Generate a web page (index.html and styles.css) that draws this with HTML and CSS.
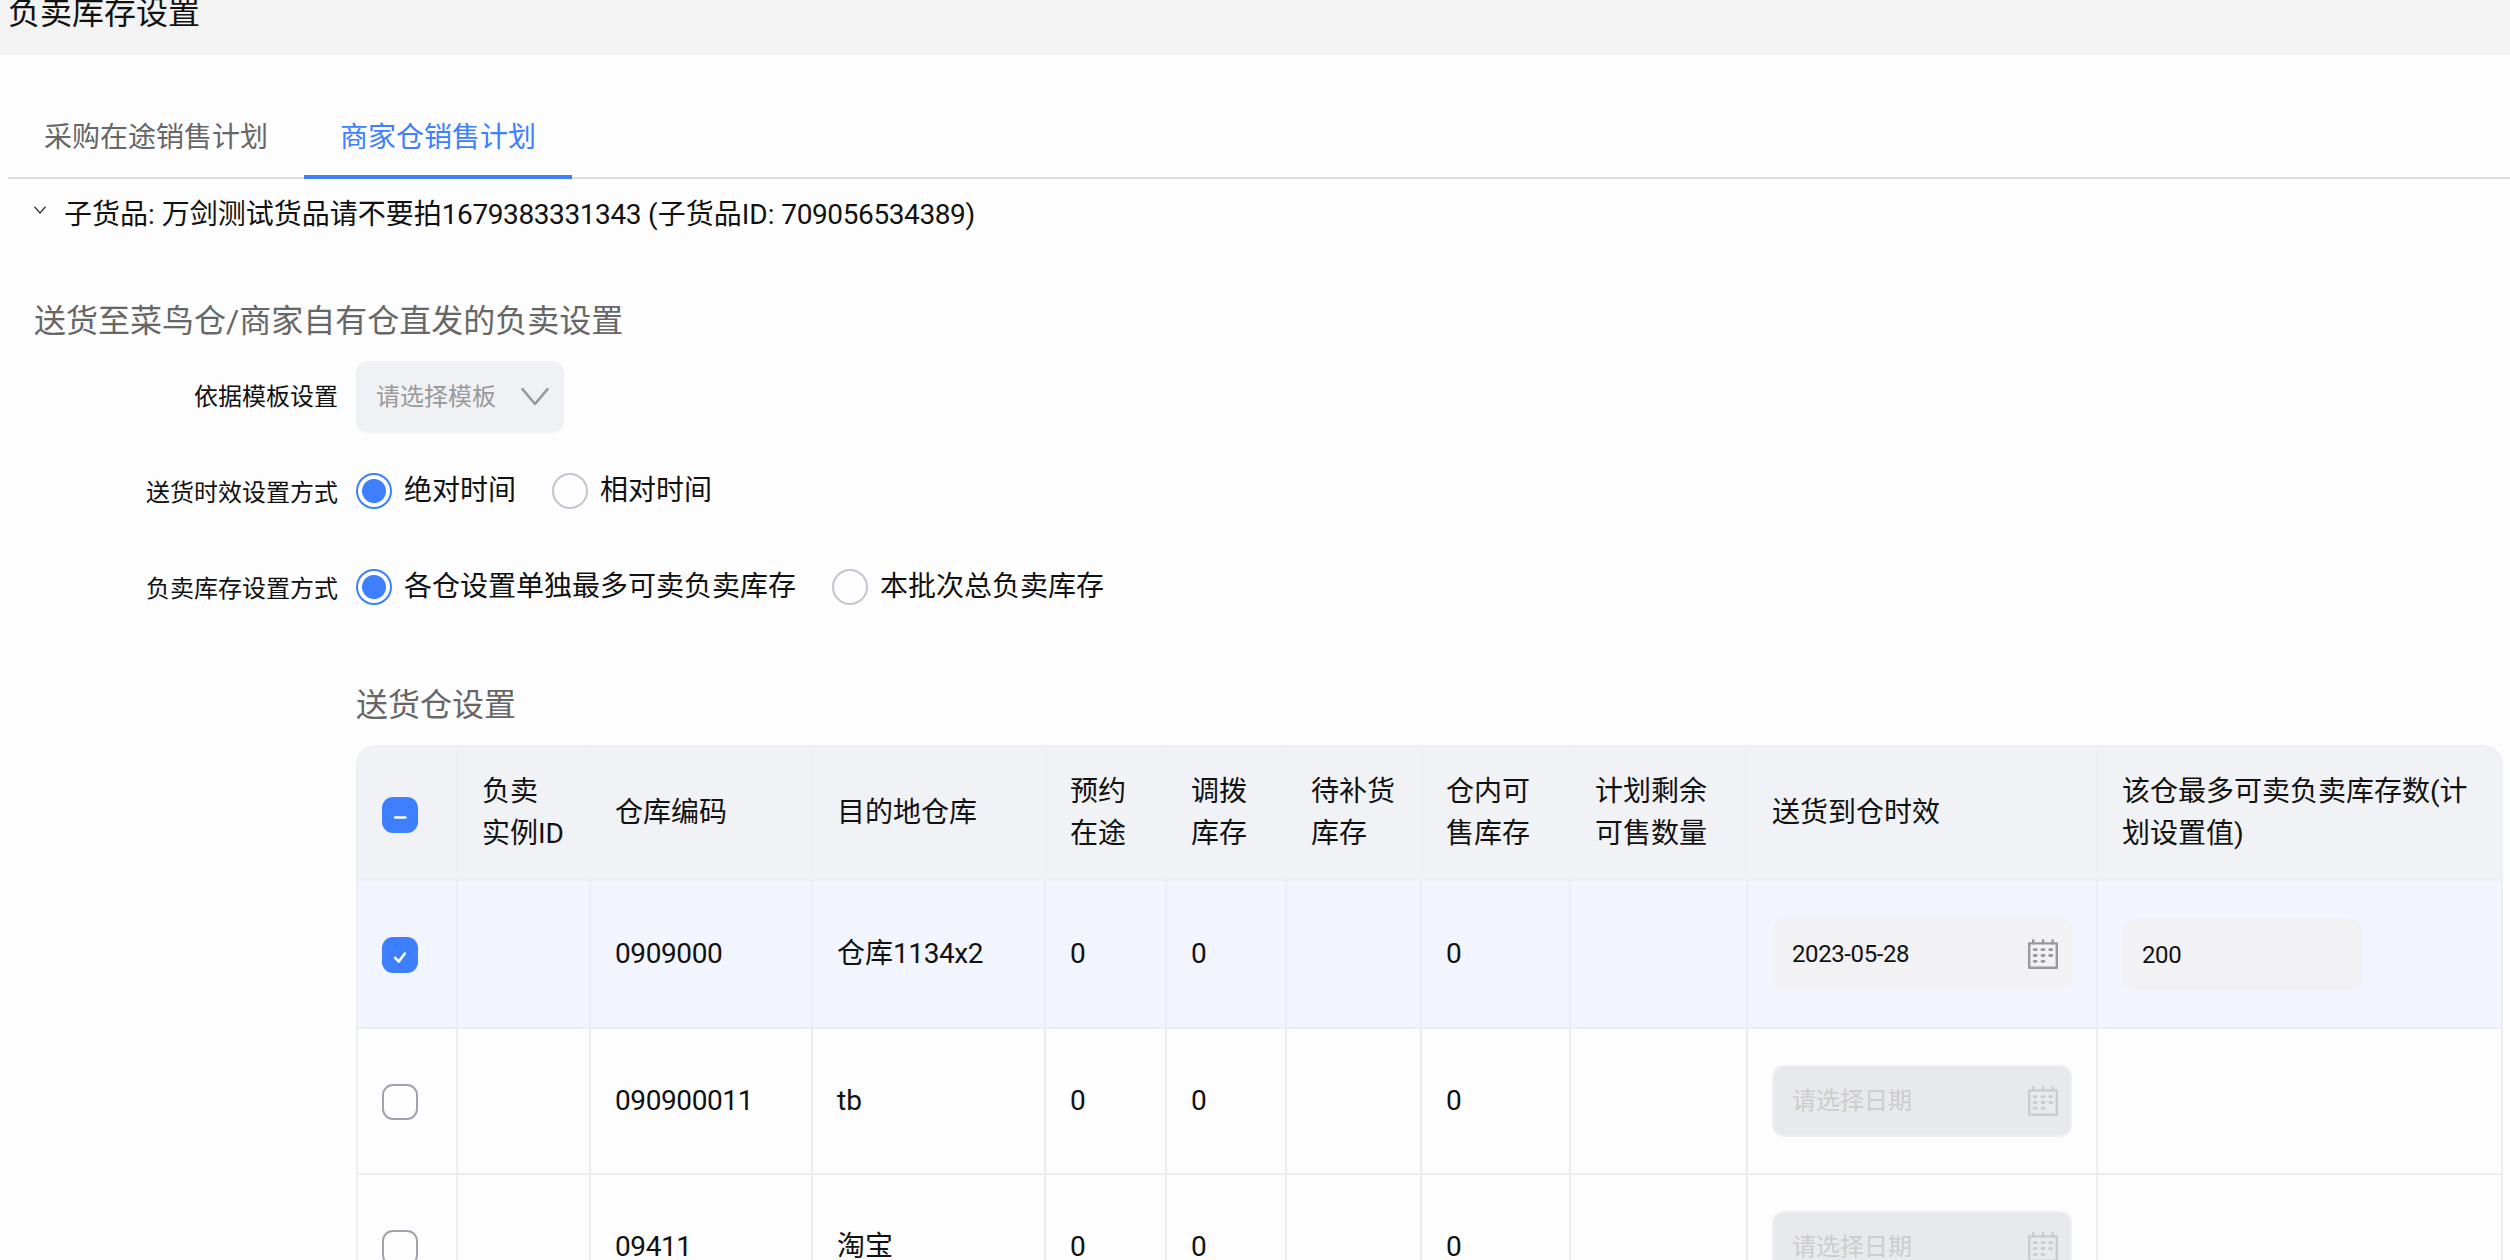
FILE: index.html
```html
<!DOCTYPE html>
<html lang="zh-CN">

<head>
    <meta charset="utf-8">
    <meta name="viewport" content="width=device-width, initial-scale=1.0">
    <title>负卖库存设置</title>
    <link rel="stylesheet" href="styles.css">
</head>

<body>
    <svg class="sprite">
        <symbol id="kalender" viewBox="0 0 30 30">
            <path d="M1.2 4.400h27.600v24.400h-27.600z" fill="none" stroke="currentColor" stroke-width="2.4" stroke-linejoin="round" />
            <path d="M5.200 1.200v3 M15 1.200v3 M24.600 1.200v3" stroke="currentColor" stroke-width="2.400" stroke-linecap="round" />
            <path d="M6.200 10.700h2 M14 10.700h2 M21.700 10.700h2 M6.200 16.500h2 M14 16.500h2 M21.700 16.500h2 M6.200 22.300h2 M14 22.300h2" stroke="currentColor" stroke-width="2.800" stroke-linecap="round" />
        </symbol>
    </svg>

    <header>
        <h1>负卖库存设置</h1>
    </header>

    <nav>
        <button>采购在途销售计划</button>
        <button class="valgt">商家仓销售计划</button>
    </nav>

    <main>
        <div class="vare">
            <svg class="pil" viewBox="0 0 12 8"><path d="M0.500 0.800 6 7 11.500 0.800" /></svg>
            <span>子货品: 万剑测试货品请不要拍<span class="tal">1679383331343</span> (子货品ID: <span class="tal">709056534389</span>)</span>
        </div>

        <h2>送货至菜鸟仓/商家自有仓直发的负卖设置</h2>

        <form>
            <div class="felt">
                <span class="label">依据模板设置</span>
                <div class="select">
                    <span>请选择模板</span>
                    <svg viewBox="0 0 28 18"><path d="M1.500 1.200 14 16 26.500 1.200" /></svg>
                </div>
            </div>
            <div class="felt">
                <span class="label">送货时效设置方式</span>
                <label class="radio on"><i></i>绝对时间</label>
                <label class="radio"><i></i>相对时间</label>
            </div>
            <div class="felt">
                <span class="label">负卖库存设置方式</span>
                <label class="radio on"><i></i>各仓设置单独最多可卖负卖库存</label>
                <label class="radio"><i></i>本批次总负卖库存</label>
            </div>
        </form>

        <section class="lager">
            <h2>送货仓设置</h2>
            <table>
                <colgroup>
                    <col class="c-check">
                    <col class="c-id">
                    <col class="c-kode">
                    <col class="c-lager">
                    <col class="c-forud">
                    <col class="c-flyt">
                    <col class="c-vent">
                    <col class="c-salg">
                    <col class="c-rest">
                    <col class="c-dato">
                    <col class="c-max">
                </colgroup>
                <thead>
                    <tr>
                        <th><span class="check on"><svg viewBox="0 0 36 36"><path d="M13.200 20.500h10.200" /></svg></span></th>
                        <th>负卖<br>实例ID</th>
                        <th>仓库编码</th>
                        <th>目的地仓库</th>
                        <th>预约<br>在途</th>
                        <th>调拨<br>库存</th>
                        <th>待补货<br>库存</th>
                        <th>仓内可<br>售库存</th>
                        <th>计划剩余<br>可售数量</th>
                        <th>送货到仓时效</th>
                        <th>该仓最多可卖负卖库存数(计<br>划设置值)</th>
                    </tr>
                </thead>
                <tbody>
                    <tr class="valgt">
                        <td><span class="check on"><svg viewBox="0 0 36 36"><path d="M13.200 20.800 16.800 24.500 22.800 16.500" /></svg></span></td>
                        <td></td>
                        <td class="tal">0909000</td>
                        <td>仓库<span class="tal">1134x2</span></td>
                        <td>0</td>
                        <td>0</td>
                        <td></td>
                        <td>0</td>
                        <td></td>
                        <td>
                            <div class="input dato"><span class="tal">2023-05-28</span><svg><use href="#kalender" /></svg></div>
                        </td>
                        <td>
                            <div class="input antal"><span class="tal">200</span></div>
                        </td>
                    </tr>
                    <tr>
                        <td><span class="check"></span></td>
                        <td></td>
                        <td class="tal">090900011</td>
                        <td>tb</td>
                        <td>0</td>
                        <td>0</td>
                        <td></td>
                        <td>0</td>
                        <td></td>
                        <td>
                            <div class="input dato disabled"><span>请选择日期</span><svg><use href="#kalender" /></svg></div>
                        </td>
                        <td></td>
                    </tr>
                    <tr>
                        <td><span class="check"></span></td>
                        <td></td>
                        <td class="tal">09411</td>
                        <td>淘宝</td>
                        <td>0</td>
                        <td>0</td>
                        <td></td>
                        <td>0</td>
                        <td></td>
                        <td>
                            <div class="input dato disabled"><span>请选择日期</span><svg><use href="#kalender" /></svg></div>
                        </td>
                        <td></td>
                    </tr>
                </tbody>
            </table>
        </section>
    </main>
</body>

</html>
```
FILE: styles.css
```css
* {
    box-sizing: border-box;
}

html,
body {
    height: 100%;
    overflow: hidden;
}

body {
    margin: 0;
    background-color: #fdfdfd;
    color: #111;
    font-family: Roboto, "Noto Sans CJK SC", sans-serif;
    font-size: 28px;
    line-height: 42px;
}

h1,
h2 {
    margin: 0;
    font-size: 32px;
    font-weight: 400;
    line-height: 48px;
}

h2 {
    color: #666;
}

.sprite {
    display: none;
}

.tal {
    letter-spacing: -0.4px;
}

header {
    display: flex;
    height: 55px;
    padding-left: 8px;
    align-items: flex-start;
    background-color: #f3f3f3;
}

header h1 {
    margin-top: -11px;
}

/* tabs */
nav {
    display: flex;
    height: 124px;
    margin-left: 8px;
    align-items: flex-end;
    box-shadow: inset 0 -2px #dcdce3;
}

nav button {
    height: 86px;
    padding: 7px 36px 0;
    border: 0;
    border-bottom: 4px solid transparent;
    background: none;
    color: #666;
    font: inherit;
}

nav .valgt {
    border-color: #3d7fff;
    color: #3d7fff;
}

.vare {
    display: flex;
    height: 70px;
    padding: 2px 0 0 34px;
    align-items: center;
    gap: 18px;
}

.pil {
    width: 12px;
    height: 8px;
    margin-top: -10px;
    fill: none;
    stroke: #333;
    stroke-width: 1.3;
}

main > h2 {
    margin: 48px 0 16px 34px;
}

/* form */
.felt {
    display: flex;
    height: 72px;
    margin-bottom: 24px;
    align-items: center;
}

.felt:first-child {
    margin-bottom: 22px;
}

.label {
    width: 338px;
    margin-right: 18px;
    padding-top: 3px;
    font-size: 24px;
    text-align: right;
}

.felt:first-child .label {
    padding-top: 0;
}

.select {
    display: flex;
    width: 208px;
    height: 72px;
    padding: 0 15px 0 20px;
    align-items: center;
    justify-content: space-between;
    border-radius: 12px;
    background-color: #f0f1f5;
    color: #999;
    font-size: 24px;
}

.select svg {
    width: 28px;
    height: 18px;
    fill: none;
    stroke: #999;
    stroke-width: 2.6;
    stroke-linecap: round;
    stroke-linejoin: round;
}

.radio {
    display: flex;
    height: 36px;
    margin-right: 36px;
    align-items: center;
    line-height: 36px;
}

.radio i {
    width: 36px;
    height: 36px;
    margin-right: 12px;
    border: 2px solid #c4c6cf;
    border-radius: 50%;
}

.radio.on i {
    border-color: #3d7fff;
    background: radial-gradient(circle, #3d7fff 11.5px, #fff 12.5px);
}

/* table */
.lager {
    padding: 34px 0 0 356px;
}

.lager h2 {
    margin-bottom: 16px;
}

table {
    width: 2147px;
    table-layout: fixed;
    border-collapse: separate;
    border-spacing: 0;
    border: 2px solid #eeeff2;
    border-right: 0;
    border-radius: 20px 20px 0 0;
    overflow: hidden;
}

.c-check { width: 100px; }
.c-id { width: 133px; }
.c-kode { width: 222px; }
.c-lager { width: 233px; }
.c-forud { width: 121px; }
.c-flyt { width: 120px; }
.c-vent { width: 135px; }
.c-salg { width: 149px; }
.c-rest { width: 177px; }
.c-dato { width: 350px; }
.c-max { width: 405px; }

th,
td {
    height: 146px;
    padding: 0 0 0 24px;
    border: 0 solid #ecedf1;
    border-width: 0 2px 2px 0;
    font-weight: 400;
    text-align: left;
    white-space: nowrap;
}

th {
    height: 134px;
    border-color: #eeeff1;
    background-color: #f1f2f5;
}

tr.valgt td {
    height: 148px;
    background-color: #f2f5fe;
}

.check {
    display: block;
    width: 36px;
    height: 36px;
    margin-top: 2px;
    border: 2px solid #a0a2ad;
    border-radius: 11px;
}

.check.on {
    border: 0;
    background-color: #3d7fff;
}

th .check {
    margin-top: 4px;
}

.check svg {
    display: block;
    fill: none;
    stroke: #fff;
    stroke-width: 2.6;
    stroke-linecap: round;
    stroke-linejoin: round;
}

.input {
    display: flex;
    height: 72px;
    padding: 0 14px 0 20px;
    align-items: center;
    justify-content: space-between;
    border-radius: 12px;
    background-color: #f2f2f4;
    font-size: 24px;
}

.input svg {
    width: 30px;
    height: 30px;
    color: #999;
}

.dato {
    width: 300px;
}

.antal {
    width: 240px;
    margin-top: 2px;
}

.disabled {
    padding: 0 12px 0 18px;
    border: 2px solid #eeeff2;
    background-color: #e8e9ed;
    color: #ccc;
}

.input.disabled svg {
    color: #ccc;
}
```
